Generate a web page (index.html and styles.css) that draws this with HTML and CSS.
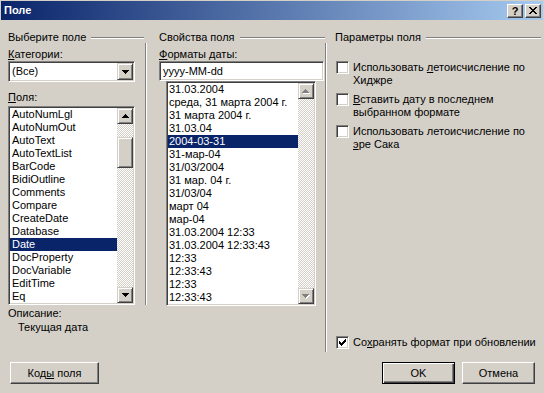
FILE: index.html
```html
<!DOCTYPE html>
<html lang="ru">
<head>
<meta charset="utf-8">
<title>Поле</title>
<link rel="stylesheet" href="styles.css">
</head>
<body>
<div class="window">
  <div class="titlebar">
    <span class="title">Поле</span>
    <div class="tb-btns">
      <span class="tbbtn help">?</span>
      <span class="tbbtn close">
        <svg width="8" height="7" viewBox="0 0 8 7" shape-rendering="crispEdges"><path d="M0 0h2v1h-2zM6 0h2v1h-2zM1 1h2v1h-2zM5 1h2v1h-2zM2 2h4v1h-4zM3 3h2v1h-2zM2 4h4v1h-4zM1 5h2v1h-2zM5 5h2v1h-2zM0 6h2v1h-2zM6 6h2v1h-2z" fill="#000"/></svg>
      </span>
    </div>
  </div>

  <div class="main">
    <section class="col col1">
      <div class="group-head"><span>Выберите поле</span><i class="hline"></i></div>
      <div class="lbl"><u>К</u>атегории:</div>
      <div class="combo sunken">
        <span class="combo-text">(Все)</span>
        <span class="dd raised">
          <svg width="7" height="4" viewBox="0 0 7 4" shape-rendering="crispEdges"><path d="M0 0h7v1h-1v1h-1v1h-1v1h-1v-1h-1v-1h-1v-1h-1z" fill="#000"/></svg>
        </span>
      </div>
      <div class="lbl lbl-fields"><u>П</u>оля:</div>
      <div class="listbox sunken lb-fields">
        <ul class="items">
          <li>AutoNumLgl</li>
          <li>AutoNumOut</li>
          <li>AutoText</li>
          <li>AutoTextList</li>
          <li>BarCode</li>
          <li>BidiOutline</li>
          <li>Comments</li>
          <li>Compare</li>
          <li>CreateDate</li>
          <li>Database</li>
          <li class="sel">Date</li>
          <li>DocProperty</li>
          <li>DocVariable</li>
          <li>EditTime</li>
          <li>Eq</li>
        </ul>
        <div class="sb">
          <span class="sbtn raised"><svg width="7" height="4" viewBox="0 0 7 4" shape-rendering="crispEdges"><path d="M3 0h1v1h1v1h1v1h1v1h-7v-1h1v-1h1v-1h1z" fill="#000"/></svg></span>
          <div class="track"><div class="thumb raised"></div></div>
          <span class="sbtn raised"><svg width="7" height="4" viewBox="0 0 7 4" shape-rendering="crispEdges"><path d="M0 0h7v1h-1v1h-1v1h-1v1h-1v-1h-1v-1h-1v-1h-1z" fill="#000"/></svg></span>
        </div>
      </div>
      <div class="desc-label">Описание:</div>
      <div class="desc">Текущая дата</div>
    </section>

    <div class="vdiv vdiv1"></div>

    <section class="col col2">
      <div class="group-head"><span>Свойства поля</span><i class="hline"></i></div>
      <div class="lbl"><u>Ф</u>орматы даты:</div>
      <div class="input sunken">yyyy-MM-dd</div>
      <div class="listbox sunken lb-formats">
        <ul class="items">
          <li>31.03.2004</li>
          <li>среда, 31 марта 2004 г.</li>
          <li>31 марта 2004 г.</li>
          <li>31.03.04</li>
          <li class="sel">2004-03-31</li>
          <li>31-мар-04</li>
          <li>31/03/2004</li>
          <li>31 мар. 04 г.</li>
          <li>31/03/04</li>
          <li>март 04</li>
          <li>мар-04</li>
          <li>31.03.2004 12:33</li>
          <li>31.03.2004 12:33:43</li>
          <li>12:33</li>
          <li>12:33:43</li>
          <li>12:33</li>
          <li>12:33:43</li>
        </ul>
        <div class="sb">
          <span class="sbtn raised"><svg width="8" height="5" viewBox="0 0 8 5" shape-rendering="crispEdges"><path d="M4 1h1v1h1v1h1v1h1v1h-7v-1h1v-1h1v-1h1z" fill="#fff"/><path d="M3 0h1v1h1v1h1v1h1v1h-7v-1h1v-1h1v-1h1z" fill="#808080"/></svg></span>
          <div class="track"></div>
          <span class="sbtn raised"><svg width="8" height="5" viewBox="0 0 8 5" shape-rendering="crispEdges"><path d="M1 1h7v1h-1v1h-1v1h-1v1h-1v-1h-1v-1h-1v-1h-1z" fill="#fff"/><path d="M0 0h7v1h-1v1h-1v1h-1v1h-1v-1h-1v-1h-1v-1h-1z" fill="#808080"/></svg></span>
        </div>
      </div>
    </section>

    <div class="vdiv vdiv2"></div>

    <section class="col col3">
      <div class="group-head"><span>Параметры поля</span><i class="hline"></i></div>
      <div class="checks">
        <div class="chk-row">
          <span class="chk sunken"></span>
          <span class="chk-label">Использовать <u>л</u>етоисчисление по<br>Хиджре</span>
        </div>
        <div class="chk-row">
          <span class="chk sunken"></span>
          <span class="chk-label"><u>В</u>ставить дату в последнем<br>выбранном формате</span>
        </div>
        <div class="chk-row">
          <span class="chk sunken"></span>
          <span class="chk-label">Использовать летоисчисление по<br><u>э</u>ре Сака</span>
        </div>
      </div>
      <div class="chk-row last">
        <span class="chk sunken">
          <svg width="7" height="7" viewBox="0 0 7 7" shape-rendering="crispEdges"><path d="M0 2h1v3h-1zM1 3h1v3h-1zM2 4h1v3h-1zM3 3h1v3h-1zM4 2h1v3h-1zM5 1h1v3h-1zM6 0h1v3h-1z" fill="#000"/></svg>
        </span>
        <span class="chk-label">Со<u>х</u>ранять формат при обновлении</span>
      </div>
    </section>
  </div>

  <div class="footer">
    <button class="btn btn-codes">Код<u>ы</u> поля</button>
    <span class="spacer"></span>
    <button class="btn btn-ok">OK</button>
    <button class="btn btn-cancel">Отмена</button>
  </div>
</div>
</body>
</html>
```

FILE: styles.css
```css
* { box-sizing: border-box; }

html, body {
  margin: 0;
  padding: 0;
}

body {
  width: 544px;
  height: 393px;
  overflow: hidden;
  background: #d4d0c8;
  font-family: "Liberation Sans", Arial, sans-serif;
  font-size: 11px;
  line-height: 13px;
  color: #000;
}

u { text-decoration: underline; text-underline-offset: 1px; }

.window {
  width: 544px;
  height: 393px;
  background: #d4d0c8;
  display: flex;
  flex-direction: column;
}

/* ---------- title bar ---------- */
.titlebar {
  margin: 1px 1px 0 1px;
  height: 19px;
  background: linear-gradient(to right, #0a246a 0%, #a6caf0 100%);
  display: flex;
  align-items: center;
  justify-content: space-between;
  padding: 0 2px 0 3px;
}

.title {
  color: #fff;
  font-weight: bold;
  font-size: 11px;
}

.tb-btns {
  display: flex;
  gap: 2px;
}

.tbbtn {
  width: 16px;
  height: 14px;
  background: #d4d0c8;
  border: 1px solid;
  border-color: #fff #404040 #404040 #fff;
  box-shadow: inset -1px -1px #808080;
  display: flex;
  align-items: center;
  justify-content: center;
  font-weight: bold;
  font-size: 11px;
  line-height: 12px;
}

/* ---------- 3D helpers ---------- */
.sunken {
  border: 1px solid;
  border-color: #808080 #fff #fff #808080;
  box-shadow: inset 1px 1px #404040, inset -1px -1px #d4d0c8;
  padding: 1px;
  background: #fff;
}

.raised {
  background: #d4d0c8;
  border: 1px solid;
  border-color: #d4d0c8 #404040 #404040 #d4d0c8;
  box-shadow: inset 1px 1px #fff, inset -1px -1px #808080;
}

/* ---------- main columns ---------- */
.main {
  display: flex;
  align-items: flex-start;
  padding: 11px 0 0 8px;
  height: 331px;
}

.col { display: flex; flex-direction: column; }

.col1 { width: 136px; }
.col2 { width: 166px; margin-left: 12px; }
.col3 { width: 206px; margin-left: 8px; align-self: stretch; }

.group-head {
  display: flex;
  align-items: center;
  height: 13px;
  white-space: nowrap;
}

.hline {
  flex: 1;
  height: 2px;
  margin-left: 5px;
  border-top: 1px solid #808080;
  border-bottom: 1px solid #fff;
}

.vdiv {
  width: 2px;
  margin-top: 12px;
  border-left: 1px solid #808080;
  border-right: 1px solid #fff;
}

.vdiv1 { height: 262px; margin-left: 1px; }
.vdiv2 { height: 309px; margin-left: 0; }

.lbl {
  margin-top: 4px;
  height: 13px;
}

.lbl-fields { margin-top: 9px; }

/* combo */
.combo {
  width: 127px;
  height: 21px;
  display: flex;
  align-items: stretch;
}

.combo-text {
  flex: 1;
  padding-left: 2px;
  line-height: 17px;
}

.dd {
  width: 16px;
  display: flex;
  align-items: center;
  justify-content: center;
}

/* listbox */
.listbox {
  display: flex;
  align-items: stretch;
}

.lb-fields {
  width: 127px;
  height: 199px;
  margin-top: 2px;
}

.lb-formats {
  width: 150px;
  height: 225px;
  margin-left: 7px;
}

.items {
  list-style: none;
  margin: 0;
  padding: 0;
  flex: 1;
  overflow: hidden;
}

.items li {
  height: 13px;
  line-height: 13px;
  padding-left: 2px;
  white-space: nowrap;
  overflow: hidden;
}

.lb-formats .items li { padding-left: 1px; }

.items li.sel {
  background: #0a246a;
  color: #fff;
}

.sb {
  width: 16px;
  display: flex;
  flex-direction: column;
}

.sbtn {
  height: 16px;
  display: flex;
  align-items: center;
  justify-content: center;
  flex: none;
}

.track {
  flex: 1;
  background-color: #d4d0c8;
  background-image: conic-gradient(#fff 25%, #d4d0c8 0 50%, #fff 0 75%, #d4d0c8 0);
  background-size: 2px 2px;
}

.thumb {
  margin-top: 13px;
  height: 31px;
}

.desc-label { margin-top: 2px; }
.desc { margin-top: 1px; padding-left: 10px; }

/* input */
.input {
  width: 165px;
  height: 20px;
  padding-left: 3px;
  line-height: 16px;
}

/* checkboxes */
.checks {
  margin-top: 17px;
  display: flex;
  flex-direction: column;
  gap: 6px;
}

.chk-row {
  display: flex;
  align-items: flex-start;
  padding-left: 1px;
}

.chk {
  width: 13px;
  height: 13px;
  flex: none;
  display: flex;
  align-items: center;
  justify-content: center;
  padding: 0;
}

.chk-label {
  margin-left: 4px;
  line-height: 13px;
  white-space: nowrap;
}

.last {
  margin-top: auto;
  margin-bottom: 2px;
}

/* footer buttons */
.footer {
  display: flex;
  align-items: center;
  margin-top: 11px;
  padding: 0 9px 0 10px;
}

.spacer { flex: 1; }

.btn {
  height: 22px;
  background: #d4d0c8;
  font-family: "Liberation Sans", Arial, sans-serif;
  font-size: 11px;
  color: #000;
  padding: 0;
  border: 1px solid;
  border-color: #fff #404040 #404040 #fff;
  box-shadow: inset -1px -1px #808080;
}

.btn-codes { width: 89px; }
.btn-ok { width: 73px; }
.btn-cancel { width: 73px; margin-left: 7px; }

.btn-ok {
  border: 1px solid #000;
  box-shadow: inset 1px 1px #fff, inset -1px -1px #404040, inset -2px -2px #808080;
}
```
